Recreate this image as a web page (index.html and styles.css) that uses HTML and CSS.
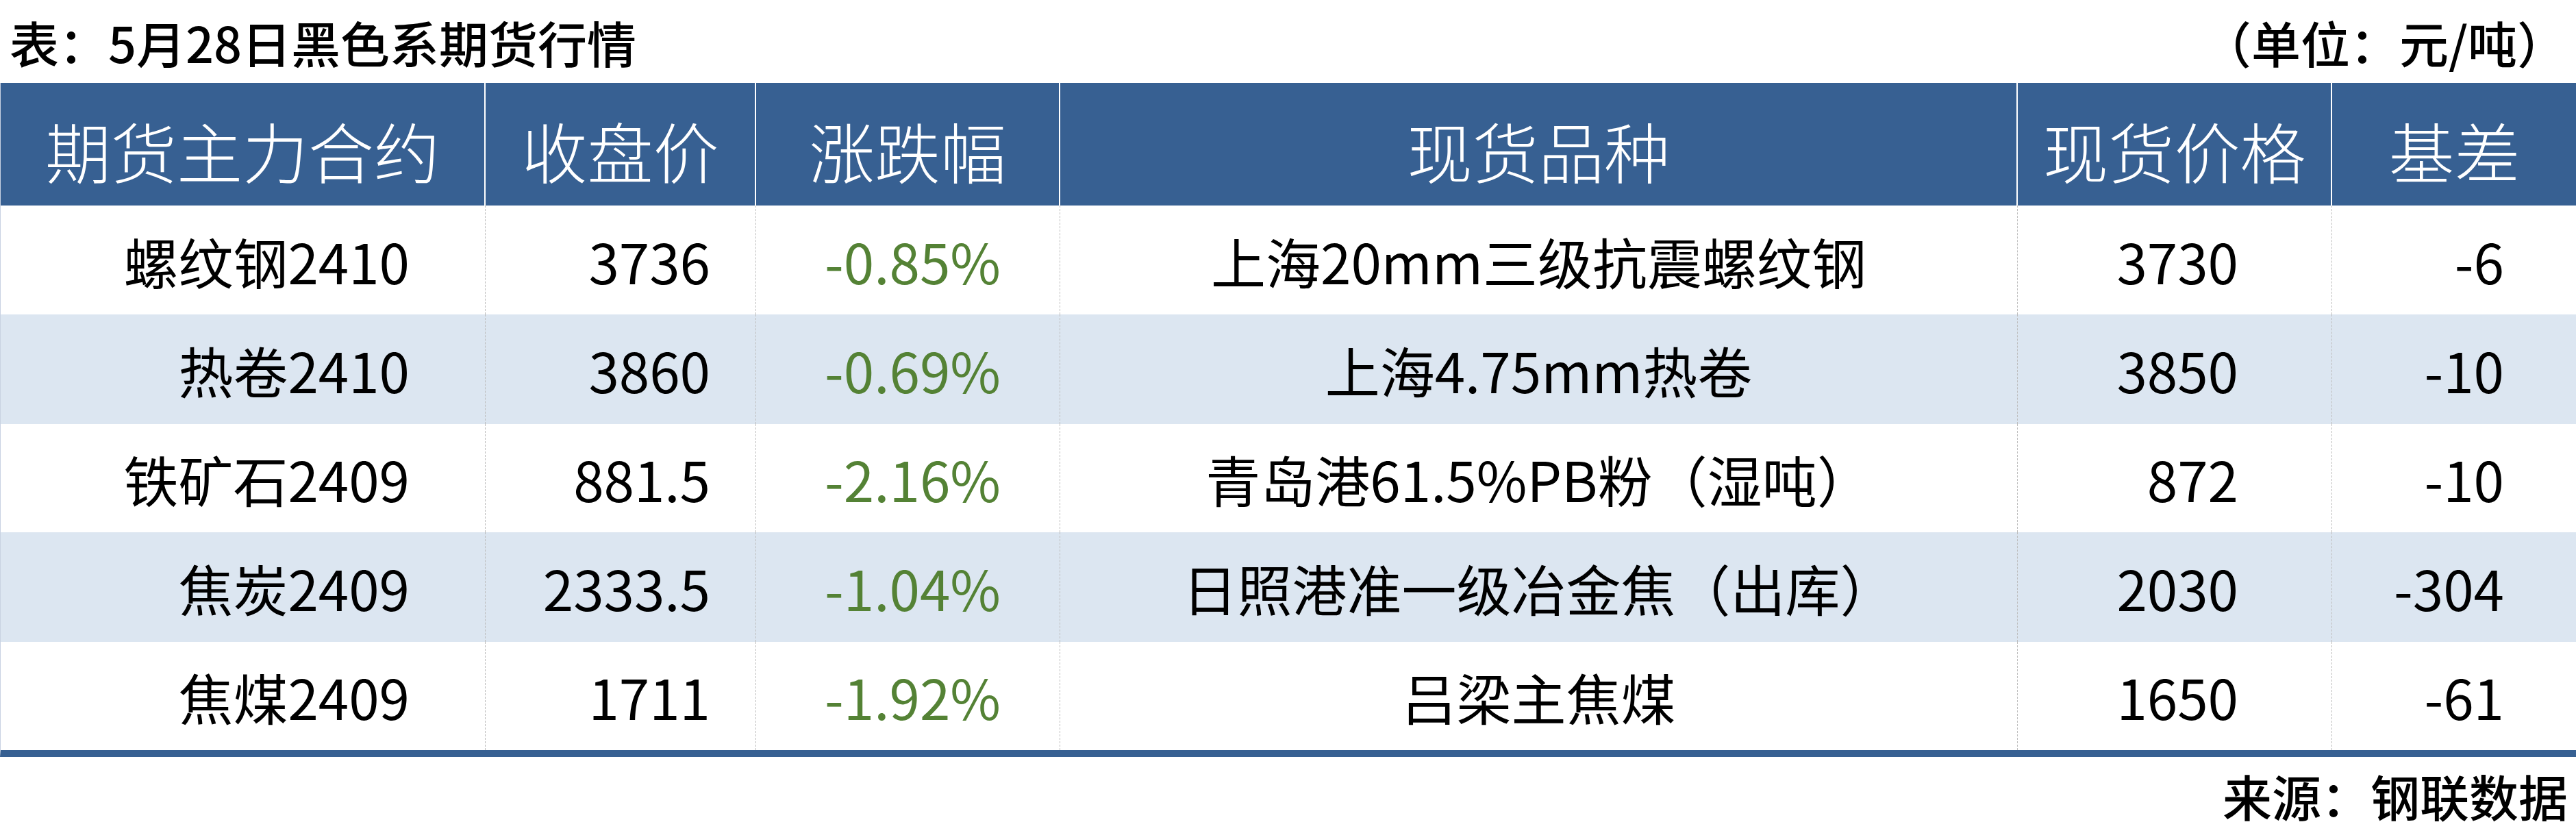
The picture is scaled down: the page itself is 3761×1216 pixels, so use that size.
FILE: index.html
```html
<!DOCTYPE html>
<html lang="zh-CN">
<head>
<meta charset="utf-8">
<title>5月28日黑色系期货行情</title>
<link rel="stylesheet" href="styles.css">
</head>
<body>
<div class="page">
  <div class="caption">
    <span class="title">表：5月28日黑色系期货行情</span>
    <span class="unit">（单位：元/吨）</span>
  </div>
  <div class="grid">
    <div class="hd">期货主力合约</div>
    <div class="hd">收盘价</div>
    <div class="hd">涨跌幅</div>
    <div class="hd">现货品种</div>
    <div class="hd">现货价格</div>
    <div class="hd last">基差</div>

    <div class="c c1">螺纹钢2410</div>
    <div class="c c2">3736</div>
    <div class="c c3">-0.85%</div>
    <div class="c c4">上海20mm三级抗震螺纹钢</div>
    <div class="c c5">3730</div>
    <div class="c c6">-6</div>

    <div class="c c1 alt">热卷2410</div>
    <div class="c c2 alt">3860</div>
    <div class="c c3 alt">-0.69%</div>
    <div class="c c4 alt">上海4.75mm热卷</div>
    <div class="c c5 alt">3850</div>
    <div class="c c6 alt">-10</div>

    <div class="c c1">铁矿石2409</div>
    <div class="c c2">881.5</div>
    <div class="c c3">-2.16%</div>
    <div class="c c4">青岛港61.5%PB粉（湿吨）</div>
    <div class="c c5">872</div>
    <div class="c c6">-10</div>

    <div class="c c1 alt">焦炭2409</div>
    <div class="c c2 alt">2333.5</div>
    <div class="c c3 alt">-1.04%</div>
    <div class="c c4 alt">日照港准一级冶金焦（出库）</div>
    <div class="c c5 alt">2030</div>
    <div class="c c6 alt">-304</div>

    <div class="c c1">焦煤2409</div>
    <div class="c c2">1711</div>
    <div class="c c3">-1.92%</div>
    <div class="c c4">吕梁主焦煤</div>
    <div class="c c5">1650</div>
    <div class="c c6">-61</div>
  </div>
  <div class="source">来源：钢联数据</div>
</div>
</body>
</html>
```

FILE: styles.css
```css
html, body {
  margin: 0;
  padding: 0;
  background: #ffffff;
}
body {
  font-family: "Noto Sans CJK SC", "Noto Sans", sans-serif;
  color: #000000;
}
.page {
  width: 3761px;
  height: 1216px;
  display: flex;
  flex-direction: column;
}
.caption {
  height: 121px;
  display: flex;
  justify-content: space-between;
  align-items: center;
  padding: 0 14px 0 14px;
  box-sizing: border-box;
  font-size: 72px;
  font-weight: 500;
  line-height: 1;
}
.grid {
  display: grid;
  grid-template-columns: 708px 395px 444px 1398px 459px 357px;
  grid-template-rows: 179px 159px 160px 158px 160px 158px;
  border-bottom: 10px solid #376092;
  border-left: 1px solid #c9d2e2;
}
.hd {
  background: #376092;
  color: #ffffff;
  font-size: 96px;
  font-weight: 300;
  display: flex;
  align-items: center;
  justify-content: center;
  padding-top: 16px;
  box-sizing: border-box;
  border-right: 2px solid #ffffff;
  line-height: 1;
  white-space: nowrap;
}
.hd.last {
  border-right: none;
}
.c {
  font-size: 80px;
  display: flex;
  align-items: center;
  justify-content: flex-end;
  box-sizing: border-box;
  border-right: 1px dashed #bdbdbd;
  line-height: 1;
  white-space: nowrap;
  background: #ffffff;
}
.c.alt {
  background: #dce6f1;
}
.c1 { padding-right: 110px; }
.c2 { padding-right: 66px; }
.c3 { padding-right: 86px; color: #548235; }
.c4 { justify-content: center; }
.c5 { padding-right: 136px; }
.c6 { padding-right: 106px; border-right: none; }
.source {
  flex: 1;
  display: flex;
  justify-content: flex-end;
  align-items: center;
  padding-right: 12px;
  font-size: 72px;
  font-weight: 500;
  line-height: 1;
}
```
